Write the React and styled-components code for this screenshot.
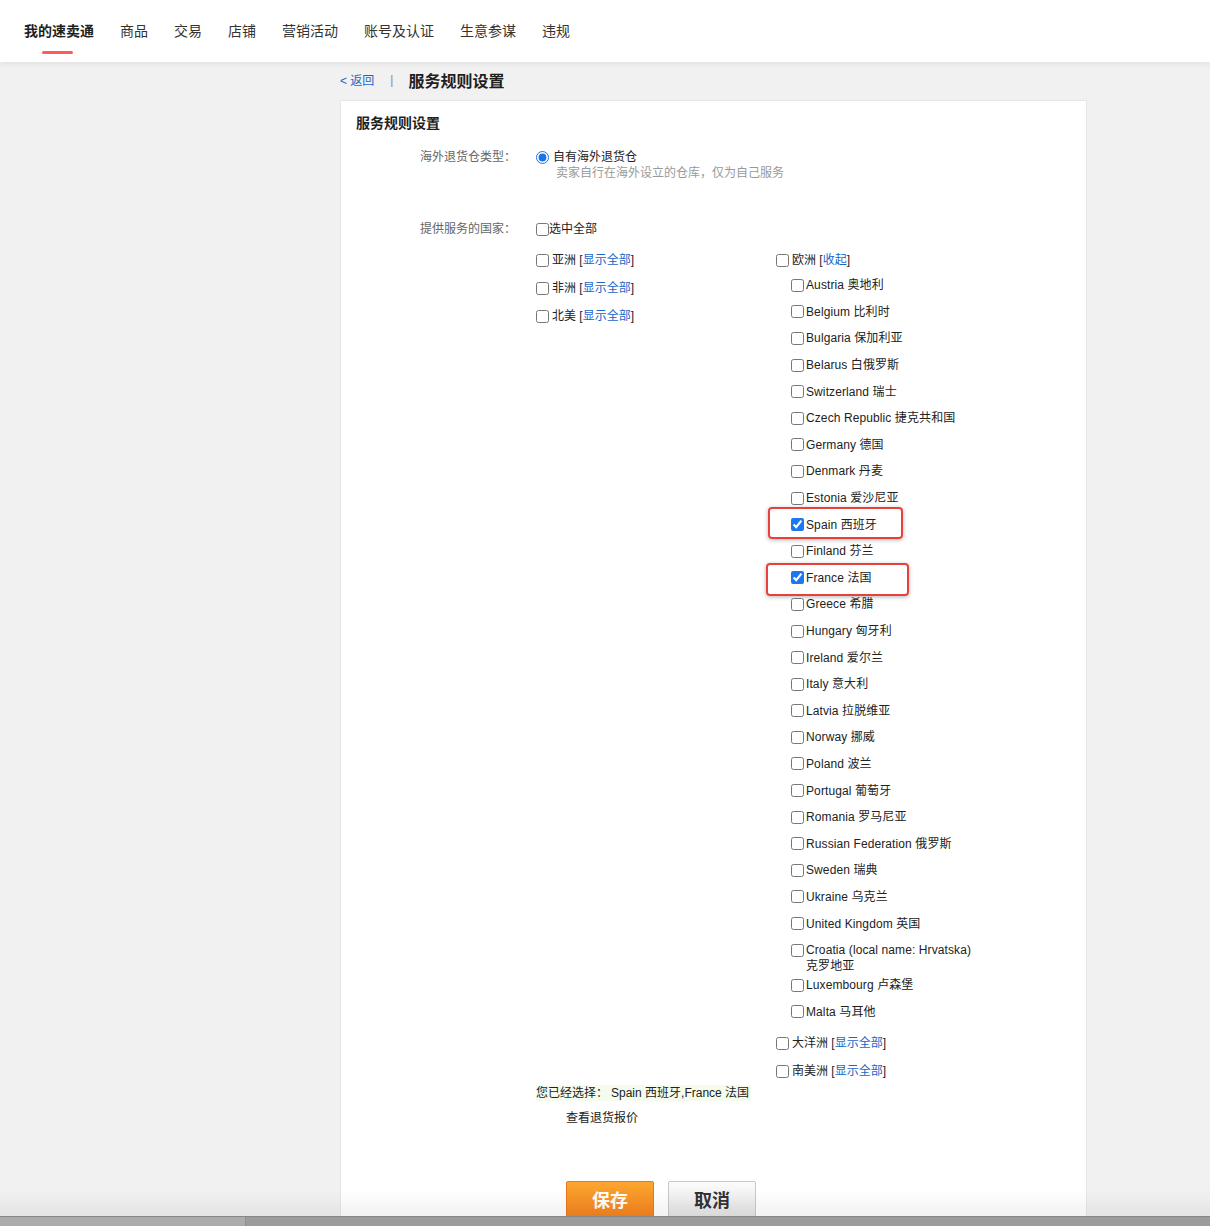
import React from "react";
import styled, { createGlobalStyle } from "styled-components";

const GlobalStyle = createGlobalStyle`
  body {
    margin: 0;
    background: #f1f1f1;
    font-family: "Liberation Sans", "Noto Sans CJK SC", sans-serif;
    color: #333;
  }
`;

const navItems = ["我的速卖通", "商品", "交易", "店铺", "营销活动", "账号及认证", "生意参谋", "违规"];

const europe = [
  ["Austria 奥地利"], ["Belgium 比利时"], ["Bulgaria 保加利亚"], ["Belarus 白俄罗斯"],
  ["Switzerland 瑞士"], ["Czech Republic 捷克共和国"], ["Germany 德国"], ["Denmark 丹麦"],
  ["Estonia 爱沙尼亚"], ["Spain 西班牙", "spain"], ["Finland 芬兰"], ["France 法国", "france"],
  ["Greece 希腊"], ["Hungary 匈牙利"], ["Ireland 爱尔兰"], ["Italy 意大利"], ["Latvia 拉脱维亚"],
  ["Norway 挪威"], ["Poland 波兰"], ["Portugal 葡萄牙"], ["Romania 罗马尼亚"],
  ["Russian Federation 俄罗斯"], ["Sweden 瑞典"], ["Ukraine 乌克兰"], ["United Kingdom 英国"],
  ["Croatia (local name: Hrvatska) 克罗地亚", "tall"], ["Luxembourg 卢森堡"], ["Malta 马耳他"],
];

const Header = styled.header`
  height: 62px;
  background: #fff;
  box-shadow: 0 2px 6px rgba(0, 0, 0, 0.07);
  display: flex;
  align-items: center;
  gap: 26px;
  padding-left: 24px;
  position: relative;
`;

const NavItem = styled.span`
  position: relative;
  font-size: 14px;
  line-height: 20px;
  color: ${(p) => (p.$active ? "#1f1f1f" : "#333")};
  font-weight: ${(p) => (p.$active ? 700 : 400)};

  &::after {
    content: "";
    display: ${(p) => (p.$active ? "block" : "none")};
    position: absolute;
    left: 18px;
    bottom: -13px;
    width: 31px;
    height: 3.5px;
    border-radius: 2px;
    background: #ff5b5b;
  }
`;

const Crumb = styled.div`
  height: 35px;
  padding-left: 340px;
  display: flex;
  align-items: center;
`;

const BackLink = styled.a`
  font-size: 12px;
  color: #1a66c9;
  text-decoration: none;
`;

const Divider = styled.span`
  margin: 0 15px 0 16px;
  color: #888;
  font-size: 12px;
`;

const PageTitle = styled.h1`
  margin: 0;
  font-size: 16px;
  font-weight: 700;
  color: #1f1f1f;
`;

const Main = styled.main`
  padding: 3px 0 0 340px;
`;

const Panel = styled.section`
  width: 747px;
  box-sizing: border-box;
  background: #fff;
  border: 1px solid #e6e6e6;
  border-bottom: none;
  padding: 12px 15px 60px;
`;

const PanelTitle = styled.h2`
  margin: 0;
  font-size: 14px;
  line-height: 20px;
  font-weight: 700;
  color: #1f1f1f;
`;

const FormRow = styled.div`
  display: grid;
  grid-template-columns: 160px 1fr;
  column-gap: 20px;
  margin-top: ${(p) => p.$top}px;
  font-size: 12px;
  line-height: 16px;
`;

const Label = styled.div`
  text-align: right;
  color: #666;
`;

const Line = styled.label`
  display: flex;
  align-items: center;
  gap: ${(p) => p.$gap ?? 3}px;
  color: #222;
  white-space: nowrap;
`;

const Radio = styled.input.attrs({ type: "radio" })`
  margin: 0;
  width: 13px;
  height: 13px;
  accent-color: #1a73e8;
`;

const Check = styled.input.attrs({ type: "checkbox" })`
  margin: 0;
  width: 13px;
  height: 13px;
  flex: none;
  accent-color: #1b78f0;
`;

const Hint = styled.div`
  padding-left: 20px;
  color: #999;
`;

const RegionGrid = styled.div`
  display: grid;
  grid-template-columns: 240px 1fr;
  margin-top: 9px;
`;

const RegionColumn = styled.div`
  display: flex;
  flex-direction: column;
`;

const RegionRow = styled(Line)`
  height: 28px;
`;

const Link = styled.a`
  color: #1a66c9;
  text-decoration: none;
`;

const CountryList = styled.div`
  margin: -2px 0 4px;
  padding-left: 15px;
  width: 190px;
  letter-spacing: 0.1px;
`;

const CountryItem = styled.label`
  position: relative;
  display: flex;
  align-items: flex-start;
  gap: 2px;
  height: ${(p) => (p.$tall ? 35 : 26.6)}px;
  box-sizing: border-box;
  padding-top: 5.3px;
  color: #222;

  input {
    margin-top: 1.5px;
  }
`;

const Highlight = styled.span`
  position: absolute;
  top: ${(p) => p.$top}px;
  left: ${(p) => p.$left}px;
  width: ${(p) => p.$w}px;
  height: ${(p) => p.$h}px;
  box-sizing: border-box;
  border: 2px solid #e8413b;
  border-radius: 4px;
  box-shadow: 0 1px 4px rgba(0, 0, 0, 0.3);
  pointer-events: none;
`;

const Summary = styled.div`
  display: inline-block;
  background: #f5fcee;
  color: #222;
  padding-right: 2px;
`;

const Picked = styled.span`
  margin-left: 3px;
`;

const Quote = styled.div`
  margin-top: 9px;
  padding-left: 30px;
  color: #222;
`;

const Actions = styled.div`
  margin-top: 55px;
  padding-left: 30px;
  display: flex;
  gap: 14px;
`;

const Button = styled.button`
  width: 88px;
  height: 36px;
  box-sizing: border-box;
  font-family: inherit;
  font-size: 18px;
  font-weight: 700;
  border-radius: 2px;
  cursor: pointer;
  color: ${(p) => (p.$primary ? "#fff" : "#333")};
  border: 1px solid ${(p) => (p.$primary ? "#e8791a" : "#c8c8c8")};
  background: ${(p) =>
    p.$primary
      ? "linear-gradient(#fba62f, #f5831f)"
      : "linear-gradient(#fbfbfb, #e4e4e4)"};
`;

const Fade = styled.div`
  position: fixed;
  left: 0;
  right: 0;
  bottom: 9px;
  height: 28px;
  background: linear-gradient(rgba(0, 0, 0, 0), rgba(0, 0, 0, 0.05));
  pointer-events: none;
`;

const BottomBar = styled.div`
  position: fixed;
  left: 0;
  right: 0;
  bottom: 0;
  height: 9px;
  display: flex;
  border-top: 1px solid #868686;
  background: #9c9c9c;
`;

const BarPart = styled.div`
  width: 245px;
  background: #acacac;
  border-right: 1px solid #909090;
`;

const Region = ({ name, action = "显示全部" }) => (
  <RegionRow>
    <Check />
    <span>
      {name} [<Link href="#">{action}</Link>]
    </span>
  </RegionRow>
);

export default function App() {
  return (
    <>
      <GlobalStyle />
      <Header>
        {navItems.map((n, i) => (
          <NavItem key={n} $active={i === 0}>{n}</NavItem>
        ))}
      </Header>
      <Crumb>
        <BackLink href="#">&lt; 返回</BackLink>
        <Divider>|</Divider>
        <PageTitle>服务规则设置</PageTitle>
      </Crumb>
      <Main>
        <Panel>
          <PanelTitle>服务规则设置</PanelTitle>

          <FormRow $top={16}>
            <Label>海外退货仓类型：</Label>
            <div>
              <Line $gap={4}>
                <Radio defaultChecked name="wh" />
                自有海外退货仓
              </Line>
              <Hint>卖家自行在海外设立的仓库，仅为自己服务</Hint>
            </div>
          </FormRow>

          <FormRow $top={40}>
            <Label>提供服务的国家：</Label>
            <div>
              <Line $gap={0}>
                <Check />
                选中全部
              </Line>
              <RegionGrid>
                <RegionColumn>
                  <Region name="亚洲" />
                  <Region name="非洲" />
                  <Region name="北美" />
                </RegionColumn>
                <RegionColumn>
                  <Region name="欧洲" action="收起" />
                  <CountryList>
                    {europe.map(([name, flag]) => (
                      <CountryItem key={name} $tall={flag === "tall"}>
                        <Check defaultChecked={flag === "spain" || flag === "france"} />
                        <span>{name}</span>
                        {flag === "spain" && <Highlight $top={-4} $left={-23} $w={135} $h={32} />}
                        {flag === "france" && <Highlight $top={-2} $left={-25} $w={143} $h={33} />}
                      </CountryItem>
                    ))}
                  </CountryList>
                  <Region name="大洋洲" />
                  <Region name="南美洲" />
                </RegionColumn>
              </RegionGrid>
              <Summary>
                您已经选择：<Picked>Spain 西班牙,France 法国</Picked>
              </Summary>
              <Quote>查看退货报价</Quote>
              <Actions>
                <Button $primary>保存</Button>
                <Button>取消</Button>
              </Actions>
            </div>
          </FormRow>
        </Panel>
      </Main>
      <Fade />
      <BottomBar>
        <BarPart />
      </BottomBar>
    </>
  );
}
